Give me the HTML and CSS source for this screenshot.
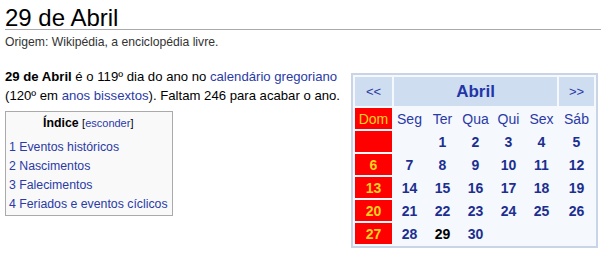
FILE: index.html
```html
<!DOCTYPE html>
<html lang="pt">
<head>
<meta charset="utf-8">
<title>29 de Abril</title>
<link rel="stylesheet" href="styles.css">
</head>
<body>
<div class="page">
  <h1 class="title">29 de Abril</h1>
  <div class="origin">Origem: Wikipédia, a enciclopédia livre.</div>

  <table class="cal">
    <tr>
      <td class="nav">&lt;&lt;</td>
      <td class="month" colspan="5">Abril</td>
      <td class="nav">&gt;&gt;</td>
    </tr>
    <tr class="dow">
      <td class="sun">Dom</td><td>Seg</td><td>Ter</td><td>Qua</td><td>Qui</td><td>Sex</td><td class="sat">Sáb</td>
    </tr>
    <tr class="week">
      <td class="sun"></td><td></td><td>1</td><td>2</td><td>3</td><td>4</td><td>5</td>
    </tr>
    <tr class="week">
      <td class="sun">6</td><td>7</td><td>8</td><td>9</td><td>10</td><td>11</td><td>12</td>
    </tr>
    <tr class="week">
      <td class="sun">13</td><td>14</td><td>15</td><td>16</td><td>17</td><td>18</td><td>19</td>
    </tr>
    <tr class="week">
      <td class="sun">20</td><td>21</td><td>22</td><td>23</td><td>24</td><td>25</td><td>26</td>
    </tr>
    <tr class="week">
      <td class="sun">27</td><td>28</td><td class="today">29</td><td>30</td><td></td><td></td><td></td>
    </tr>
  </table>

  <p class="intro"><b>29 de Abril</b> é o 119º dia do ano no <a href="#">calendário gregoriano</a> (120º em <a href="#">anos bissextos</a>). Faltam 246 para acabar o ano.</p>

  <div class="toc">
    <div class="toc-title"><b>Índice</b> <span class="toggle">[<a href="#">esconder</a>]</span></div>
    <ul class="toc-list">
      <li><a href="#">1 Eventos históricos</a></li>
      <li><a href="#">2 Nascimentos</a></li>
      <li><a href="#">3 Falecimentos</a></li>
      <li><a href="#">4 Feriados e eventos cíclicos</a></li>
    </ul>
  </div>
</div>
</body>
</html>
```

FILE: styles.css
```css
html, body {
  margin: 0;
  padding: 0;
  background: #fff;
}
body {
  font-family: "Liberation Sans", Arial, sans-serif;
  color: #000;
}
.page {
  padding: 0 2px 0 5px;
}
a {
  color: #2a3aa6;
  text-decoration: none;
}
.title {
  margin: 6px 0 0 0;
  font-size: 24px;
  font-weight: normal;
  line-height: 23px;
  border-bottom: 1px solid #aaaaaa;
}
.origin {
  margin-top: 3px;
  font-size: 12.2px;
  line-height: 18px;
  color: #333;
}
.intro {
  margin: 16px 0 0 0;
  font-size: 13.15px;
  line-height: 19px;
}
.cal {
  float: right;
  margin: 22px 3px 0 8px;
  border: 2px solid #c9d5e6;
  border-spacing: 2px;
  background: #f5f8fd;
  font-family: "Liberation Sans", Arial, sans-serif;
}
.cal td {
  padding: 0;
  height: 21px;
  width: 31px;
  text-align: center;
  font-size: 14px;
  color: #1c2f8f;
}
.cal td.sun {
  width: 37px;
}
.cal td.sat {
  width: 35px;
}
.cal .nav {
  height: 29px;
  background: #cfddf0;
  font-size: 13px;
  color: #2a3aa6;
}
.cal .month {
  height: 29px;
  background: #cfddf0;
  font-size: 17px;
  font-weight: bold;
  color: #2335a8;
}
.cal .dow td {
  font-weight: normal;
  color: #2a3aa6;
}
.cal .week td {
  font-weight: bold;
}
.cal td.sun {
  background: #ff0000;
  color: #ffd21f;
}
.cal .dow td.sun {
  color: #ffd21f;
}
.cal .week td.today {
  color: #000;
}
.toc {
  display: inline-block;
  margin-top: 6px;
  border: 1px solid #aaaaaa;
  background: #f9f9f9;
  padding: 2px 4px 1px 3px;
  font-size: 12.3px;
  line-height: 19px;
}
.toc-title {
  text-align: center;
}
.toggle {
  font-size: 11px;
}
.toc-list {
  list-style: none;
  margin: 5px 0 0 0;
  padding: 0;
}
```
